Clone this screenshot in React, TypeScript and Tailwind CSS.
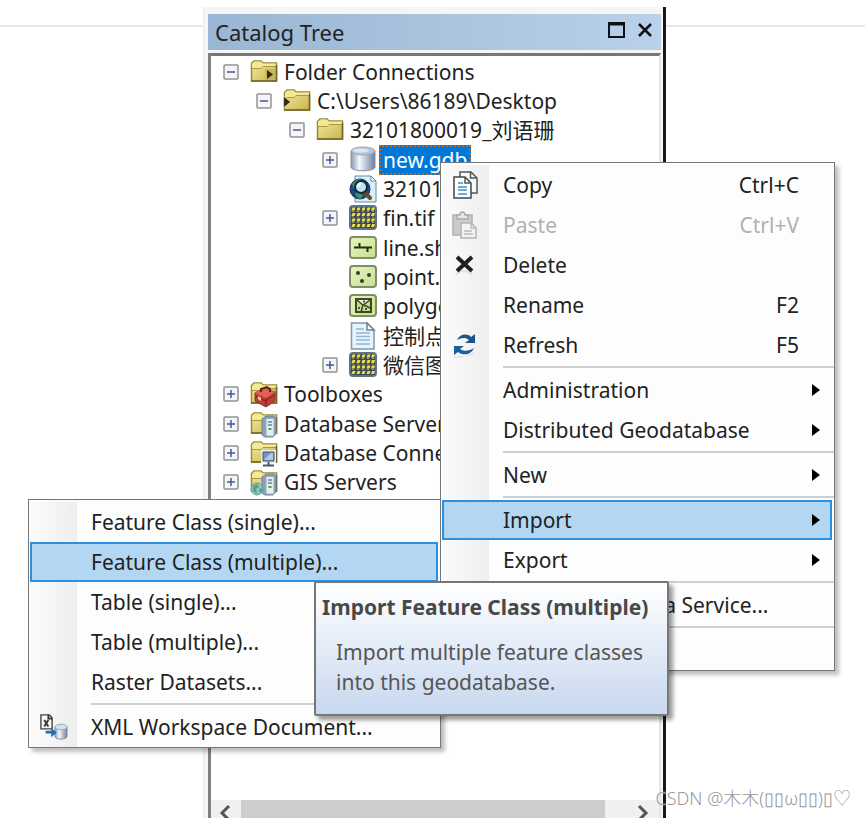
import { useState } from "react";
import type { ReactNode } from "react";

type IconName =
  | "folders"
  | "folderLink"
  | "folder"
  | "gdb"
  | "map"
  | "raster"
  | "line"
  | "point"
  | "polygon"
  | "text"
  | "toolbox"
  | "dbServer"
  | "dbConn"
  | "gisServer";

interface TreeRow {
  label: string;
  icon: IconName;
  level: number;
  state?: "open" | "closed";
}

interface MenuEntry {
  label: string;
  shortcut?: string;
  icon?: ReactNode;
  disabled?: boolean;
  submenu?: boolean;
}

const indents = ["pl-3", "pl-[45px]", "pl-[78px]", "pl-[111px]"];

const rows: TreeRow[] = [
  { label: "Folder Connections", icon: "folders", level: 0, state: "open" },
  { label: "C:\\Users\\86189\\Desktop", icon: "folderLink", level: 1, state: "open" },
  { label: "32101800019_刘语珊", icon: "folder", level: 2, state: "open" },
  { label: "new.gdb", icon: "gdb", level: 3, state: "closed" },
  { label: "32101800019", icon: "map", level: 3 },
  { label: "fin.tif", icon: "raster", level: 3, state: "closed" },
  { label: "line.shp", icon: "line", level: 3 },
  { label: "point.shp", icon: "point", level: 3 },
  { label: "polygon.shp", icon: "polygon", level: 3 },
  { label: "控制点", icon: "text", level: 3 },
  { label: "微信图片", icon: "raster", level: 3, state: "closed" },
  { label: "Toolboxes", icon: "toolbox", level: 0, state: "closed" },
  { label: "Database Servers", icon: "dbServer", level: 0, state: "closed" },
  { label: "Database Connections", icon: "dbConn", level: 0, state: "closed" },
  { label: "GIS Servers", icon: "gisServer", level: 0, state: "closed" },
];

const FolderShape = () => (
  <>
    <path d="M1.500 5.500 4 3h7l2 2h13.500v18h-25z" fill="url(#folderFill)" stroke="#9c8934" strokeWidth="1.500" />
    <path d="M2 8.500V6l2.500-2.500h6L13 5.500h13v3H13l-2 2H2z" fill="#f3ea96" />
    <path d="M2 10.500h9l2-2h13" fill="none" stroke="#ab983f" />
    <path d="M1 23h25.500V7" fill="none" stroke="#75662a" strokeWidth="1.500" />
  </>
);

const ServerShape = () => (
  <>
    <path d="m12 9 4-3h8l2 2v16l-3 3h-8l-3-2z" fill="#8ba2b8" stroke="#6c8398" />
    <path d="M16 8.500h8V26h-8z" fill="#e6eef4" stroke="#97aabc" />
    <path d="M18 12h4M18 15h4" stroke="#6d8499" strokeWidth="1.500" />
    <path d="M18.500 18h3v2h-3z" fill="#3dae35" />
  </>
);

const GreenTile = () => (
  <rect x="1" y="3" width="26" height="21" rx="3" fill="url(#tileFill)" stroke="#7c8f66" strokeWidth="2" />
);

const TreeIcon = ({ name }: { name: IconName }) => (
  <svg viewBox="0 0 28 28" className="h-7 w-7 shrink-0" aria-hidden="true">
    {name === "folders" && (
      <>
        <FolderShape />
        <path d="M15 11h10v11H15z" fill="#c8b75b" />
        <path d="m17 12 6 4.500-6 4.500z" fill="#332b12" />
      </>
    )}
    {name === "folderLink" && (
      <>
        <FolderShape />
        <path d="M0 9h3l5 6-5 6H0z" fill="#d9cf91" />
        <path d="m1 10 6 5-6 5z" fill="#332b12" />
      </>
    )}
    {name === "folder" && <FolderShape />}
    {name === "gdb" && (
      <>
        <path d="M2 5v16c0 5 24 5 24 0V5z" fill="url(#gdbFill)" stroke="#8292a8" />
        <ellipse cx="14" cy="5" rx="12" ry="4" fill="#b8c5d8" stroke="#98a8bd" />
        <ellipse cx="12" cy="4.500" rx="8" ry="2" fill="#dde5ef" />
      </>
    )}
    {name === "map" && (
      <>
        <path d="M6 1h16l5 5v21H6z" fill="#dceef7" stroke="#5e8ca6" />
        <path d="M22 1v5h5z" fill="#fff" stroke="#5e8ca6" />
        <circle cx="11" cy="14" r="10" fill="#1d477b" stroke="#17315a" />
        <path d="M3 9c3-4 6-5 9-5l-3 4 1 4-5 2zM6 18l5-1 3 4-3 3c-3-1-4-3-5-6z" fill="#3c9560" />
        <path d="m15 17 6 6" stroke="#6b4824" strokeWidth="4" strokeLinecap="round" />
        <circle cx="12" cy="12" r="6" fill="#bce4f2" stroke="#13283c" strokeWidth="2" />
        <path d="M9 12a3 3 0 0 1 3-3" fill="none" stroke="#fff" strokeWidth="2" />
      </>
    )}
    {name === "raster" && (
      <>
        <rect x="1" y="2" width="26" height="23" rx="3" fill="#3d4a52" stroke="#5d7486" strokeWidth="2" />
        {[5, 10.5, 16, 21.5].map((y) =>
          [4.5, 9.5, 14.5, 19.5, 24].map((x) => (
            <path
              key={`${x}-${y}`}
              d={`M${x - 2} ${y + 1.5}l1-3h3l-1 3z`}
              fill="#efdf43"
            />
          ))
        )}
        {[7.5, 13, 18.5].map((y) => (
          <path key={y} d={`M3 ${y}h22`} stroke="#8a99a3" strokeDasharray="2 3" />
        ))}
      </>
    )}
    {name === "line" && (
      <>
        <GreenTile />
        <path d="M5 13.500h18M10.500 9v5M18.500 13v5" fill="none" stroke="#222d17" strokeWidth="2" />
      </>
    )}
    {name === "point" && (
      <>
        <GreenTile />
        <circle cx="9" cy="10" r="2" fill="#34402a" />
        <circle cx="20" cy="12" r="2" fill="#34402a" />
        <circle cx="13" cy="18" r="2" fill="#34402a" />
      </>
    )}
    {name === "polygon" && (
      <>
        <GreenTile />
        <path d="M7 7h15v13H7z" fill="#c6da91" stroke="#3c4828" strokeWidth="2" />
        <path d="M9 8h11l-5 5z" fill="#f1f8dc" />
        <path d="m8 8 6 5 7-5M14 13l-2 7M15 13l6 3" fill="none" stroke="#39462a" strokeWidth="1.500" />
        <circle cx="15" cy="9.500" r="1" fill="#222" />
        <circle cx="10" cy="16" r="1" fill="#222" />
        <circle cx="17" cy="17" r="1" fill="#222" />
      </>
    )}
    {name === "text" && (
      <>
        <path d="M2.500 1H18l7 7v19H2.500z" fill="#e8f3fb" stroke="#8197ab" strokeWidth="1.500" />
        <path d="M18 1v7h7z" fill="#fff" stroke="#6d8496" strokeWidth="1.500" />
        <path d="M7 7h8M7 11h14M7 14.500h14M7 18h14M7 22h14" stroke="#8fb8d9" strokeWidth="1.500" />
      </>
    )}
    {name === "toolbox" && (
      <>
        <FolderShape />
        <path d="m5 13 9-5 11 4v9l-9 6-11-6z" fill="#bd3e33" stroke="#8e3028" />
        <path d="m5 13 9-5 11 4-9 6z" fill="#de6254" />
        <path d="M16 18v8M6 16l9 5 10-6" fill="none" stroke="#812019" />
        <path d="M11 12V9l6-2 3 2v3" fill="none" stroke="#682019" strokeWidth="2" />
        <path d="m8 16 3 2v3l-3-2z" fill="#edc9c4" />
      </>
    )}
    {name === "dbServer" && (
      <>
        <FolderShape />
        <ServerShape />
      </>
    )}
    {name === "dbConn" && (
      <>
        <FolderShape />
        <path d="M12 12h13v11H12z" fill="#9eb8d5" stroke="#e8eef3" strokeWidth="2" />
        <path d="M13 13h11v9H13z" fill="#7896bd" stroke="#3e5674" />
        <path d="m14 21 7-7h2v7z" fill="#b1c9e2" />
        <path d="M18.500 23v3M13 26.500h11" stroke="#43576b" strokeWidth="2" />
      </>
    )}
    {name === "gisServer" && (
      <>
        <FolderShape />
        <ServerShape />
        <circle cx="7" cy="21" r="6" fill="#8cc0dc" stroke="#6796a5" />
        <path d="m3 18 4-2 2 3-3 2 1 5-4-3zM10 20l3 1-2 4-2-2z" fill="#5aa75b" />
      </>
    )}
  </svg>
);

const CopyIcon = () => (
  <svg viewBox="0 0 28 28" className="h-7 w-7" aria-hidden="true">
    <path d="M8 1h11l6 6v15H8z" fill="#f4f9fd" stroke="#555" strokeWidth="1.500" />
    <path d="M18.500 1v6h6" fill="none" stroke="#555" strokeWidth="1.500" />
    <path d="M2 6h11l6 6v15H2z" fill="#fff" stroke="#444" strokeWidth="1.500" />
    <path d="M13 6v6h6" fill="none" stroke="#555" strokeWidth="1.500" />
    <path d="M6 12h5M6 16h9M6 19h9M6 23h9" stroke="#3d91d0" strokeWidth="1.500" />
  </svg>
);

const PasteIcon = () => (
  <svg viewBox="0 0 28 28" className="h-7 w-7" aria-hidden="true">
    <path d="M1 4h19v20H1z" fill="#cacaca" stroke="#b0b0b0" strokeWidth="1.500" />
    <path d="M5 8V4h3c0-4 5-4 5 0h3v4z" fill="#e8e8e8" stroke="#aaa" strokeWidth="1.500" />
    <path d="M9 12h10l5 5v10H9z" fill="#f3f3f3" stroke="#b4b4b4" strokeWidth="1.500" />
    <path d="M19 12v5h5M12 20h8M12 23h9" fill="none" stroke="#bcbcbc" strokeWidth="1.500" />
  </svg>
);

const DeleteIcon = () => (
  <svg viewBox="0 0 28 28" className="h-7 w-7" aria-hidden="true">
    <path d="M4 24c2-3 5-4 8-4 3 0 6 1 8 4" fill="none" stroke="#e2e2e2" strokeWidth="2" />
    <path d="m5 6 15 14M20 6 5 20" stroke="#202020" strokeWidth="4" />
  </svg>
);

const RefreshIcon = () => (
  <svg viewBox="0 0 28 28" className="h-7 w-7" aria-hidden="true">
    <path d="M5 9C8 3 15 2 19 6l4-3v9H13l4-3c-4-3-8-2-12 0z" fill="#1c5388" />
    <path d="M22 17c-3 7-11 8-16 4l-4 3v-9h10l-4 3c4 3 9 2 14-1z" fill="#1c5f9b" />
    <path d="M2 26h9M15 25l7-3" stroke="#d5d5d5" />
  </svg>
);

const XmlIcon = () => (
  <svg viewBox="0 0 30 28" className="h-7 w-7" aria-hidden="true">
    <path d="M1 1h9l3 3v12H1z" fill="#f7f7f7" stroke="#444" strokeWidth="1.500" />
    <path d="M9 1v4h4M4.500 6.500l4.500 7M9 6.500l-4.500 7" fill="none" stroke="#333" strokeWidth="2" />
    <path d="M16 14v10c0 4 13 4 13 0V14z" fill="url(#gdbFill)" stroke="#8090a4" />
    <ellipse cx="22.500" cy="14" rx="6.500" ry="3" fill="#d4e0ec" stroke="#91a5ba" />
    <path d="M6 18v3h6v4l6-5-6-5v3z" fill="#216eb9" />
  </svg>
);

const contextGroups: MenuEntry[][] = [
  [
    { label: "Copy", shortcut: "Ctrl+C", icon: <CopyIcon /> },
    { label: "Paste", shortcut: "Ctrl+V", icon: <PasteIcon />, disabled: true },
    { label: "Delete", icon: <DeleteIcon /> },
    { label: "Rename", shortcut: "F2" },
    { label: "Refresh", shortcut: "F5", icon: <RefreshIcon /> },
  ],
  [
    { label: "Administration", submenu: true },
    { label: "Distributed Geodatabase", submenu: true },
  ],
  [{ label: "New", submenu: true }],
  [
    { label: "Import", submenu: true },
    { label: "Export", submenu: true },
  ],
  [{ label: "Share as Geodata Service..." }],
  [{ label: "Properties..." }],
];

const importGroups: MenuEntry[][] = [
  [
    { label: "Feature Class (single)..." },
    { label: "Feature Class (multiple)..." },
    { label: "Table (single)..." },
    { label: "Table (multiple)..." },
    { label: "Raster Datasets..." },
  ],
  [{ label: "XML Workspace Document...", icon: <XmlIcon /> }],
];

interface MenuProps {
  label: string;
  groups: MenuEntry[][];
  active: string;
  onActivate: (label: string) => void;
  className: string;
}

const Menu = ({ label, groups, active, onActivate, className }: MenuProps) => (
  <div
    role="menu"
    aria-label={label}
    className={`absolute border border-[#777] bg-[#fdfdfd] pt-0.5 shadow-[4px_4px_4px_rgba(0,0,0,0.25)] ${className}`}
  >
    <div className="bg-linear-to-r from-[#fbfbfb] to-[#eee] bg-[length:46px_100%] bg-no-repeat bg-[position:2px_0]">
      {groups.map((group, index) => (
        <div key={index} role="group">
          {index > 0 && (
            <div role="separator" className="ml-[62px] h-[5px] py-px">
              <div className="h-0.5 bg-[#cfcfcf]" />
            </div>
          )}
          {group.map((item) => (
            <button
              key={item.label}
              type="button"
              role="menuitem"
              disabled={item.disabled}
              aria-haspopup={item.submenu ? "menu" : undefined}
              onClick={() => onActivate(item.label)}
              className={`mx-px flex h-10 w-[calc(100%-3px)] items-center border-2 pr-2 text-left ${
                item.label === active
                  ? "border-[#2b90e2] bg-[#b3d7f3]"
                  : "border-transparent"
              } ${item.disabled ? "text-[#b1b1b1]" : "text-[#222]"}`}
            >
              <span className="flex w-[59px] shrink-0 pl-2">{item.icon}</span>
              <span className="grow whitespace-nowrap">{item.label}</span>
              {item.shortcut && <span className="pr-[23px]">{item.shortcut}</span>}
              {item.submenu && (
                <svg viewBox="0 0 8 12" className="mr-0.5 h-3 w-2" aria-hidden="true">
                  <path d="m0 0 8 6-8 6z" fill="#000" />
                </svg>
              )}
            </button>
          ))}
        </div>
      ))}
    </div>
  </div>
);

const App = () => {
  const [selected, setSelected] = useState("new.gdb");
  const [active, setActive] = useState("Import");
  const [activeImport, setActiveImport] = useState("Feature Class (multiple)...");

  return (
    <div className="relative flex h-screen overflow-hidden bg-white font-['Noto_Sans','Noto_Sans_CJK_SC',sans-serif] text-[21px] leading-7 text-[#222]">
      <svg className="absolute h-0 w-0" aria-hidden="true">
        <defs>
          <linearGradient id="folderFill" x2="1" y2="1">
            <stop stopColor="#f5eb9d" />
            <stop offset="1" stopColor="#c9b54e" />
          </linearGradient>
          <linearGradient id="tileFill" x2="1" y2="1">
            <stop stopColor="#e7f6bd" />
            <stop offset="1" stopColor="#c9de92" />
          </linearGradient>
          <linearGradient id="gdbFill">
            <stop stopColor="#8799b2" />
            <stop offset=".35" stopColor="#f5f8fb" />
            <stop offset="1" stopColor="#6c809d" />
          </linearGradient>
        </defs>
      </svg>

      <div className="mt-[25px] h-0.5 w-[203px] shrink-0 bg-[#e8e8e8]" />

      <section className="mt-[7px] flex min-w-0 grow flex-col border-r-3 border-l border-r-[#181818] border-l-[#e9e9e9] bg-[#f5f5f5] pt-[7px] pr-0.5 pl-1">
        <header className="flex h-9 shrink-0 items-center justify-between bg-linear-to-r from-[#9ab6d4] to-[#b9d1ea] pr-2 pl-[7px]">
          <h1 className="text-[22px]">Catalog Tree</h1>
          <div className="flex items-center gap-3 pb-1">
            <button type="button" aria-label="Maximize">
              <svg viewBox="0 0 17 16" className="h-4 w-[17px]">
                <path d="M1 1h15v14H1z" fill="none" stroke="#111" strokeWidth="2" />
                <path d="M0 2h17" stroke="#111" strokeWidth="3" />
              </svg>
            </button>
            <button type="button" aria-label="Close">
              <svg viewBox="0 0 16 14" className="h-3.5 w-4">
                <path d="m2 1 12 12M14 1 2 13" stroke="#111" strokeWidth="2.500" />
              </svg>
            </button>
          </div>
        </header>

        <div className="mt-[3px] flex grow flex-col border-t-3 border-r-2 border-l-3 border-t-[#777] border-r-[#e5e5e5] border-l-[#808080] bg-white">
          <ul
            role="tree"
            aria-label="Catalog Tree"
            className="mt-px grid h-[440px] auto-rows-fr"
          >
            {rows.map((row) => (
              <li
                key={row.label}
                role="treeitem"
                aria-level={row.level + 1}
                aria-selected={row.label === selected}
                onClick={() => setSelected(row.label)}
                className={`flex items-center whitespace-nowrap ${indents[row.level]}`}
              >
                <span className="flex w-[27px] shrink-0">
                  {row.state && (
                    <svg viewBox="0 0 16 16" className="h-4 w-4" aria-hidden="true">
                      <rect x="1" y="1" width="14" height="14" rx="1" fill="#f5f5f5" stroke="#929292" strokeWidth="1.500" />
                      <path
                        d={row.state === "open" ? "M4 8h8" : "M4 8h8M8 4v8"}
                        stroke="#4358a0"
                        strokeWidth="1.500"
                      />
                    </svg>
                  )}
                </span>
                <TreeIcon name={row.icon} />
                <span
                  className={`ml-0.5 border-2 border-dotted px-0.5 leading-[26px] ${
                    row.label === selected
                      ? "border-[#b5672d] bg-[#0078d7] text-white"
                      : "border-transparent"
                  }`}
                >
                  {row.label}
                </span>
              </li>
            ))}
          </ul>

          <div className="mt-auto flex h-[18px] overflow-hidden bg-[#f0f0f0]">
            <button type="button" aria-label="Scroll left" className="w-[30px] shrink-0 pt-1 pl-2">
              <svg viewBox="0 0 12 18" className="h-[18px] w-3">
                <path d="m10 2-7 7 7 7" fill="none" stroke="#555" strokeWidth="3" />
              </svg>
            </button>
            <div className="grow bg-[#cdcdcd]" />
            <button type="button" aria-label="Scroll right" className="w-[54px] shrink-0 pt-1 pl-[32px]">
              <svg viewBox="0 0 12 18" className="h-[18px] w-3">
                <path d="m2 2 7 7-7 7" fill="none" stroke="#555" strokeWidth="3" />
              </svg>
            </button>
          </div>
        </div>
      </section>

      <div className="mt-[25px] h-0.5 w-[199px] shrink-0 bg-[#e8e8e8]" />

      <Menu
        label="Import"
        groups={importGroups}
        active={activeImport}
        onActivate={setActiveImport}
        className="top-[499px] left-7 w-[413px]"
      />
      <Menu
        label="Geodatabase"
        groups={contextGroups}
        active={active}
        onActivate={setActive}
        className="top-[162px] left-[440px] w-[395px]"
      />

      <div
        role="tooltip"
        className="absolute top-[581px] left-[314px] w-[355px] rounded-xs border-2 border-[#777] bg-linear-to-b from-white to-[#c8d8ef] px-1.5 pt-2.5 pb-[17px] text-[#555] shadow-[4px_4px_4px_rgba(0,0,0,0.4)]"
      >
        <p className="leading-7 font-bold whitespace-nowrap text-[#484848]">
          Import Feature Class (multiple)
        </p>
        <p className="mt-4 pl-3.5 leading-[30px] whitespace-nowrap">
          Import multiple feature classes
          <br />
          into this geodatabase.
        </p>
      </div>

      <p className="absolute right-3.5 bottom-1.5 text-lg leading-7 font-light whitespace-nowrap text-[#999] [text-shadow:0_0_2px_white]">
        CSDN @木木(▯▯ω▯▯)▯♡
      </p>
    </div>
  );
};

export default App;
